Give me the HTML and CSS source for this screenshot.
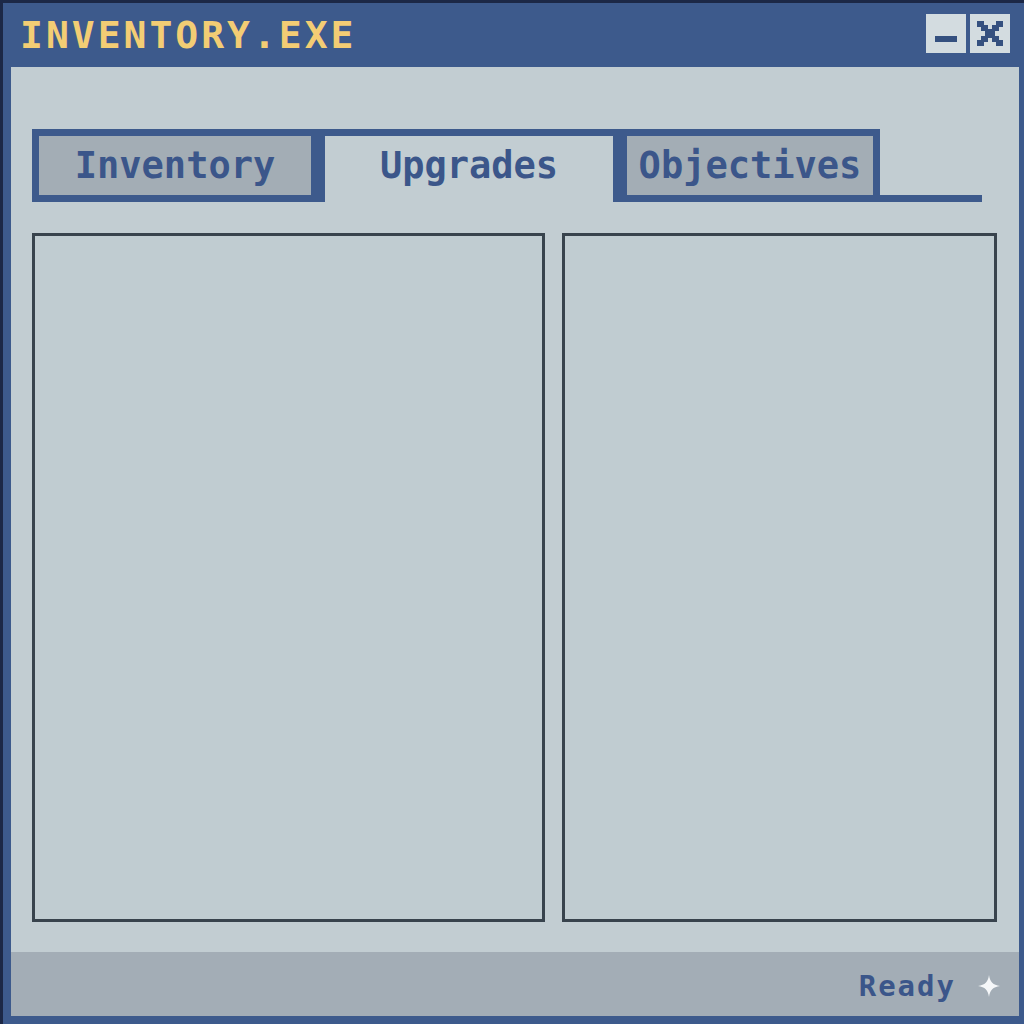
FILE: index.html
```html
<!DOCTYPE html>
<html lang="en">

<head>
    <meta charset="UTF-8">
    <meta name="viewport" content="width=device-width, initial-scale=1.0">
    <title>INVENTORY.EXE</title>
    <link rel="stylesheet" href="styles.css">
</head>

<body>
    <div class="window">
        <div class="titlebar">
            <div class="title">INVENTORY.EXE</div>
            <div class="controls">
                <button class="ctrl">
                    <span class="min-bar"></span>
                </button>
                <button class="ctrl">
                    <svg width="26" height="25" viewBox="0 0 26 25">
                        <path fill="#34507f" d="M0 0h7v6h-7z M19 0h7v6h-7z M4 4h7v6h-7z M15 4h7v6h-7z M8 8h10v9h-10z M4 15h7v6h-7z M15 15h7v6h-7z M0 19h7v6h-7z M19 19h7v6h-7z"/>
                    </svg>
                </button>
            </div>
        </div>

        <div class="content">
            <div class="tabs">
                <div class="tab tab-inventory">Inventory</div>
                <div class="tab tab-upgrades active">Upgrades</div>
                <div class="tab tab-objectives">Objectives</div>
                <div class="tab-line"></div>
            </div>
            <div class="panels">
                <div class="panel panel-left"></div>
                <div class="panel panel-right"></div>
            </div>
        </div>

        <div class="statusbar">
            <span class="status-text">Ready</span>
            <svg class="sparkle" width="22" height="22" viewBox="0 0 22 22">
                <path fill="#f5f7f9" d="M11 0 C12 7 15 10 22 11 C15 12 12 15 11 22 C10 15 7 12 0 11 C7 10 10 7 11 0 Z"/>
            </svg>
        </div>
    </div>
</body>

</html>
```

FILE: styles.css
```css
body {
    margin: 0;
    font-family: 'DejaVu Sans Mono', 'Liberation Mono', monospace;
    background-color: #3d5a8c;
}

.window {
    width: 1024px;
    height: 1024px;
    box-sizing: border-box;
    display: flex;
    flex-direction: column;
    background-color: #3d5a8c;
    border-top: 3px solid #1c2846;
    border-left: 3px solid #1c2846;
}

.titlebar {
    height: 64px;
    display: flex;
    align-items: center;
    justify-content: space-between;
    padding: 0 14px 0 17px;
}

.title {
    color: #f3cd74;
    font-size: 38px;
    font-weight: bold;
    letter-spacing: 3px;
    line-height: 1;
}

.controls {
    display: flex;
    gap: 4px;
    margin-top: -4px;
}

.ctrl {
    width: 40px;
    height: 39px;
    padding: 0;
    border: none;
    background-color: #d3dce0;
    display: flex;
    align-items: center;
    justify-content: center;
}

.min-bar {
    display: block;
    width: 22px;
    height: 6px;
    margin-top: 12px;
    background-color: #34507f;
}

.content {
    flex: 1;
    margin: 0 5px 0 8px;
    padding: 62px 22px 30px 21px;
    background-color: #c2cdd2;
    display: flex;
    flex-direction: column;
}

.tabs {
    display: flex;
    align-items: flex-end;
    height: 73px;
}

.tab {
    box-sizing: border-box;
    height: 73px;
    border: 7px solid #3d5a8c;
    background-color: #a3adb5;
    color: #3b568a;
    font-size: 37px;
    font-weight: bold;
    display: flex;
    align-items: center;
    justify-content: center;
}

.tab-inventory {
    width: 286px;
}

.tab-upgrades {
    width: 302px;
}

.tab-objectives {
    width: 260px;
}

.tab.active {
    background-color: #c2cdd2;
    border-bottom: none;
    padding-bottom: 7px;
}

.tab-line {
    width: 102px;
    height: 7px;
    background-color: #3d5a8c;
}

.panels {
    flex: 1;
    display: flex;
    gap: 17px;
    margin-top: 31px;
}

.panel {
    box-sizing: border-box;
    border: 3px solid #38434d;
    background-color: #c0ccd1;
}

.panel-left {
    width: 513px;
}

.panel-right {
    flex: 1;
}

.statusbar {
    height: 64px;
    margin: 0 5px 8px 8px;
    background-color: #a3adb6;
    display: flex;
    align-items: center;
    justify-content: flex-end;
    gap: 22px;
    padding-right: 19px;
}

.status-text {
    color: #3b568a;
    font-size: 29px;
    font-weight: bold;
    letter-spacing: 2px;
    margin-top: 4px;
}

.sparkle {
    display: block;
    margin-top: 4px;
}
```
